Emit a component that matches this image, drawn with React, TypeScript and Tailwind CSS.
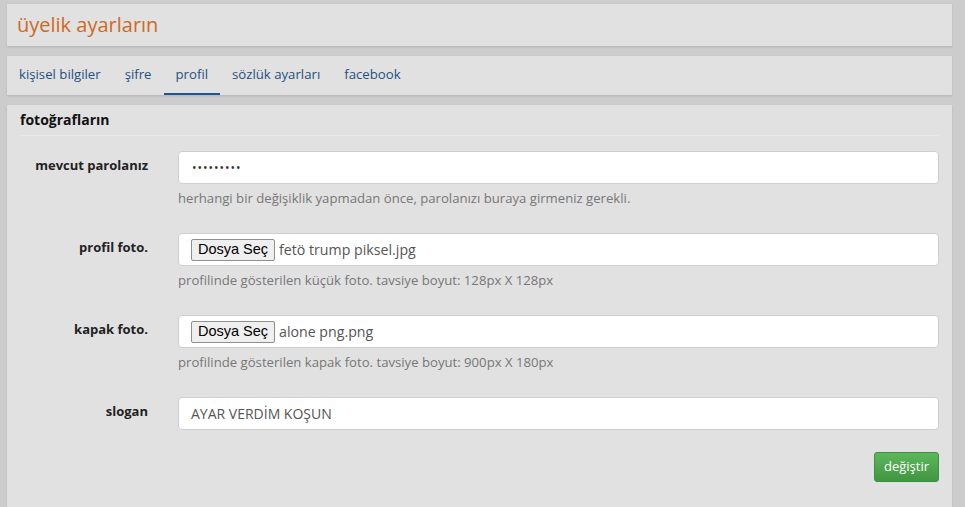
import React from 'react';

const tabs = ['kişisel bilgiler', 'şifre', 'profil', 'sözlük ayarları', 'facebook'];

const panel = 'bg-[#e1e1e1] shadow-[0_1px_2px_rgba(0,0,0,0.12)]';

const FileField = ({ fileName }: { fileName: string }) => (
  <div className="h-[33px] flex items-center rounded-[4px] border border-[#cfcfcf] bg-white pl-[12px]">
    <span className="h-[22px] w-[84px] justify-center flex items-center rounded-[2px] border border-[#8f8f8f] bg-[#efefef] text-[14.5px] text-black font-['Liberation_Sans',sans-serif]">
      Dosya Seç
    </span>
    <span className="ml-[4px] text-[14.2px] text-[#555]">{fileName}</span>
  </div>
);

const Row = ({
  label,
  help,
  children,
}: {
  label: string;
  help?: string;
  children: React.ReactNode;
}) => (
  <div className="flex">
    <label className="w-[128px] shrink-0 text-right pt-[4px] text-[13px] font-bold text-[#222] leading-[20px]">
      {label}
    </label>
    <div className="ml-[30px] flex-1">
      {children}
      {help && <p className="mt-[5px] text-[13.15px] leading-[19px] text-[#777]">{help}</p>}
    </div>
  </div>
);

export default function App() {
  return (
    <div className="h-[507px] overflow-hidden bg-[#cccccc] pl-[7px] pr-[13px] pt-[4px] font-['Open_Sans',sans-serif]">
      {/* başlık */}
      <div className={`${panel} h-[42px] flex items-center px-[10px]`}>
        <h1 className="text-[20px] text-[#d0691f]">üyelik ayarların</h1>
      </div>

      {/* sekmeler */}
      <div className={`${panel} mt-[10px] h-[39px] flex`}>
        {tabs.map((t) => (
          <a
            key={t}
            className={`px-[12px] flex items-center text-[13.2px] text-[#26507f] border-b-2 ${
              t === 'profil' ? 'border-[#1a56a0]' : 'border-transparent'
            }`}
          >
            {t}
          </a>
        ))}
      </div>

      {/* form */}
      <div className={`${panel} mt-[10px] h-[420px] px-[13px] pt-[4px]`}>
        <h2 className="text-[14px] font-bold text-[#111] leading-[20px] pb-[5px] pt-[1px] border-b border-[#e9e9e9]">
          fotoğrafların
        </h2>

        <div className="mt-[15px] flex flex-col gap-[25px]">
          <Row
            label="mevcut parolanız"
            help="herhangi bir değişiklik yapmadan önce, parolanızı buraya girmeniz gerekli."
          >
            <div className="h-[33px] flex items-center rounded-[4px] border border-[#cfcfcf] bg-white pl-[13px] text-[12px] tracking-[1px] text-[#333]">
              •••••••••
            </div>
          </Row>

          <Row
            label="profil foto."
            help="profilinde gösterilen küçük foto. tavsiye boyut: 128px X 128px"
          >
            <FileField fileName="fetö trump piksel.jpg" />
          </Row>

          <Row
            label="kapak foto."
            help="profilinde gösterilen kapak foto. tavsiye boyut: 900px X 180px"
          >
            <FileField fileName="alone png.png" />
          </Row>

          <Row label="slogan">
            <div className="h-[33px] flex items-center rounded-[4px] border border-[#cfcfcf] bg-white pl-[12px] text-[14px] text-[#555]">
              AYAR VERDİM KOŞUN
            </div>
          </Row>
        </div>

        <div className="mt-[22px] flex justify-end">
          <button className="h-[30px] w-[65px] rounded-[3px] border border-[#3e8f3e] bg-gradient-to-b from-[#5cb85c] to-[#419641] text-[13px] text-white">
            değiştir
          </button>
        </div>
      </div>
    </div>
  );
}
